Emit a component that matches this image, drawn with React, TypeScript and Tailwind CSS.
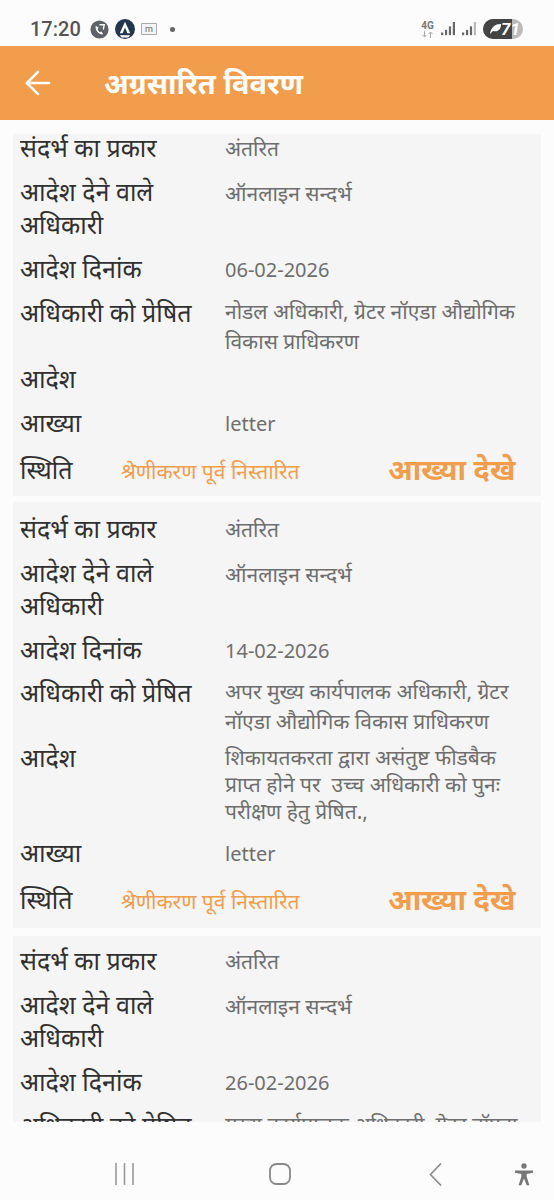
import { ArrowLeft } from "lucide-react";

type Row = { label: string; value?: string; pt: string; valueClass?: string };

const font = "font-['Noto_Sans','Noto_Sans_Devanagari','Lohit_Devanagari',sans-serif]";

function DetailRow({ label, value, pt, valueClass = "pt-[2px] text-[21px] leading-[30px]" }: Row) {
  return (
    <div className={`flex ${pt}`}>
      <div className="w-[205px] shrink-0 pr-2 text-[25px] leading-[33px] text-[#303030]">{label}</div>
      <div className={`flex-1 whitespace-pre-wrap pr-4 text-[#6e6e6e] ${valueClass}`}>{value}</div>
    </div>
  );
}

function StatusRow() {
  return (
    <div className="flex items-center pt-[14px]">
      <div className="w-[101px] shrink-0 text-[25px] leading-[33px] text-[#303030]">स्थिति</div>
      <div className="w-[267px] shrink-0 pt-[3px] text-[21px] leading-[30px] text-[#f19d4b]">श्रेणीकरण पूर्व निस्तारित</div>
      <div className="pb-[2px] text-[29px] leading-[31px] font-bold whitespace-nowrap text-[#f19d4b]">आख्या देखे</div>
    </div>
  );
}

function Card({
  date,
  officer,
  order,
  first,
  boxClass,
  officerPt = "pt-[11px]",
  orderPt = "pt-[6px]",
}: {
  date: string;
  officer: string;
  order?: string;
  first?: boolean;
  boxClass: string;
  officerPt?: string;
  orderPt?: string;
}) {
  return (
    <section className={`shrink-0 bg-[#f5f5f5] pl-[7px] ${boxClass}`}>
      <div className={first ? "-mt-[3px]" : ""}>
        <DetailRow label="संदर्भ का प्रकार" value="अंतरित" pt="pt-0" />
        <DetailRow label="आदेश देने वाले अधिकारी" value="ऑनलाइन सन्दर्भ" pt="pt-[11px]" valueClass="pt-[3px] text-[21px] leading-[30px]" />
        <DetailRow label="आदेश दिनांक" value={date} pt="pt-[11px]" valueClass="pt-[3px] text-[20px] leading-[30px]" />
        <DetailRow label="अधिकारी को प्रेषित" value={officer} pt={officerPt} valueClass="pt-0 text-[21px] leading-[30px]" />
        <DetailRow label="आदेश" value={order} pt={orderPt} valueClass="pt-[3px] text-[21px] leading-[27px]" />
        <DetailRow label="आख्या" value="letter" pt="pt-[11px]" valueClass="pt-[3px] text-[20px] leading-[30px]" />
        <StatusRow />
      </div>
    </section>
  );
}

function StatusBar() {
  return (
    <div className="flex h-[46px] items-center bg-[#fcfcfc] pt-[12px] pl-[30px] pr-[31px]">
      <span className="font-['Roboto',sans-serif] text-[20px] font-medium text-[#555]">17:20</span>
      <div className="ml-[9px] flex items-center gap-[6px]">
        <svg width="19" height="19" viewBox="0 0 20 20">
          <circle cx="10" cy="10" r="9.500" fill="#5f6368" />
          <path d="M6 6l3 2-1 2 2 3 2-1 2 3c-4 1-9-4-8-9z" fill="#fff" />
          <path d="M10 5h5l-1 5" stroke="#fff" strokeWidth="1.400" fill="none" />
        </svg>
        <svg width="20" height="20" viewBox="0 0 21 21">
          <circle cx="10.500" cy="10.500" r="10.500" fill="#24364f" />
          <path d="M10.500 3L16 15h-3l-2.500-6L8 15H5z" fill="#fff" />
          <path d="M5 17h11l-2 2.500H7z" fill="#fff" />
        </svg>
        <svg width="16" height="14" viewBox="0 0 16 14">
          <path d="M.5 1.500h15v11H.5z" fill="#f4f4f4" stroke="#aaa" />
          <text x="8" y="10" textAnchor="middle" fontSize="9" fill="#666" fontFamily="Roboto">m</text>
        </svg>
      </div>
      <span className="ml-[13px] h-[5px] w-[5px] rounded-full bg-[#666]" />
      <div className="ml-auto flex items-center gap-[7px]">
        <div className="flex flex-col items-center leading-none">
          <span className="font-['Roboto',sans-serif] text-[10px] font-bold text-[#777]">4G</span>
          <svg width="13" height="7" viewBox="0 0 12 7" stroke="#aaa" fill="none">
            <path d="M3 0v6M1 4l2 2 2-2M9 7V1M7 3l2-2 2 2" />
          </svg>
        </div>
        <svg width="14" height="14" viewBox="0 0 16 16" fill="#666">
          <rect x="0" y="12" width="2.500" height="3" />
          <rect x="4.500" y="9" width="2.500" height="6" />
          <rect x="9" y="5" width="2.500" height="10" />
          <rect x="13.500" y="0" width="2.500" height="15" />
        </svg>
        <svg width="14" height="14" viewBox="0 0 16 16" fill="#666">
          <rect x="0" y="12" width="2.500" height="3" />
          <rect x="4.500" y="9" width="2.500" height="6" />
          <rect x="9" y="5" width="2.500" height="10" />
          <rect x="13.500" y="0" width="2.500" height="15" fill="#bbb" />
        </svg>
        <div className="relative flex h-[20px] w-[40px] items-center overflow-hidden rounded-full bg-[#bbb]">
          <div className="h-full w-[29px] bg-[#444]" />
          <svg className="absolute left-[7px] top-[5px]" width="11" height="10" viewBox="0 0 11 10">
            <path d="M0 10C1 3 5 0 11 0c0 6-3 8-8 7z" fill="#fff" />
          </svg>
          <span className="absolute left-[18px] top-0 font-['Roboto',sans-serif] text-[17px] leading-[20px] font-bold text-white italic">71</span>
        </div>
      </div>
    </div>
  );
}

function NavBar() {
  return (
    <div className="flex h-[78px] shrink-0 items-start bg-[#fcfcfc] pt-[41px]">
      <svg className="ml-[114px]" width="21" height="22" viewBox="0 0 21 22" stroke="#999" strokeWidth="1.600">
        <path d="M2 0v22M10.500 0v22M19 0v22" />
      </svg>
      <svg className="ml-[134px]" width="22" height="22" viewBox="0 0 22 22" fill="none" stroke="#888" strokeWidth="1.800">
        <rect x="1" y="1" width="20" height="20" rx="6.500" />
      </svg>
      <svg className="ml-[138px]" width="13" height="23" viewBox="0 0 13 23" fill="none" stroke="#888" strokeWidth="1.600">
        <path d="M12 .5L1.500 11.500 12 22.500" />
      </svg>
      <svg className="ml-[73px]" width="18" height="23" viewBox="0 0 20 25" fill="#777">
        <circle cx="10" cy="3" r="3" />
        <path d="M0 8h20v2.500l-7 1.500v3l3 9.500h-3l-3-7.500-3 7.500H4l3-9.500v-3l-7-1.500z" />
      </svg>
    </div>
  );
}

export default function App() {
  return (
    <div className={`flex h-[1200px] w-[554px] flex-col overflow-hidden bg-[#fcfcfc] ${font}`}>
      <StatusBar />
      <header className="flex h-[74px] shrink-0 items-center bg-[#f19d4b] pl-[19px] text-white">
        <ArrowLeft size={38} strokeWidth={1.6} />
        <h1 className="ml-[47px] text-[29px] font-bold">अग्रसारित विवरण</h1>
      </header>
      <main className="flex min-h-0 flex-1 flex-col overflow-hidden px-[13px] pt-[14px]">
        <Card first boxClass="pb-[10px]" date="06-02-2026" officer="नोडल अधिकारी, ग्रेटर नॉएडा औद्योगिक विकास प्राधिकरण" />
        <Card
          boxClass="mt-[6px] pt-[10px] pb-[12px]"
          officerPt="pt-[10px]"
          orderPt="pt-[5px]"
          date="14-02-2026"
          officer="अपर मुख्य कार्यपालक अधिकारी, ग्रेटर नॉएडा औद्योगिक विकास प्राधिकरण"
          order="शिकायतकरता द्वारा असंतुष्ट फीडबैक प्राप्त होने पर  उच्च अधिकारी को पुनः परीक्षण हेतु प्रेषित.,"
        />
        <Card
          boxClass="mt-[8px] pt-[8px] pb-[10px]"
          date="26-02-2026"
          officer="मुख्य कार्यपालक अधिकारी, ग्रेटर नॉएडा औद्योगिक विकास प्राधिकरण"
        />
      </main>
      <NavBar />
    </div>
  );
}
